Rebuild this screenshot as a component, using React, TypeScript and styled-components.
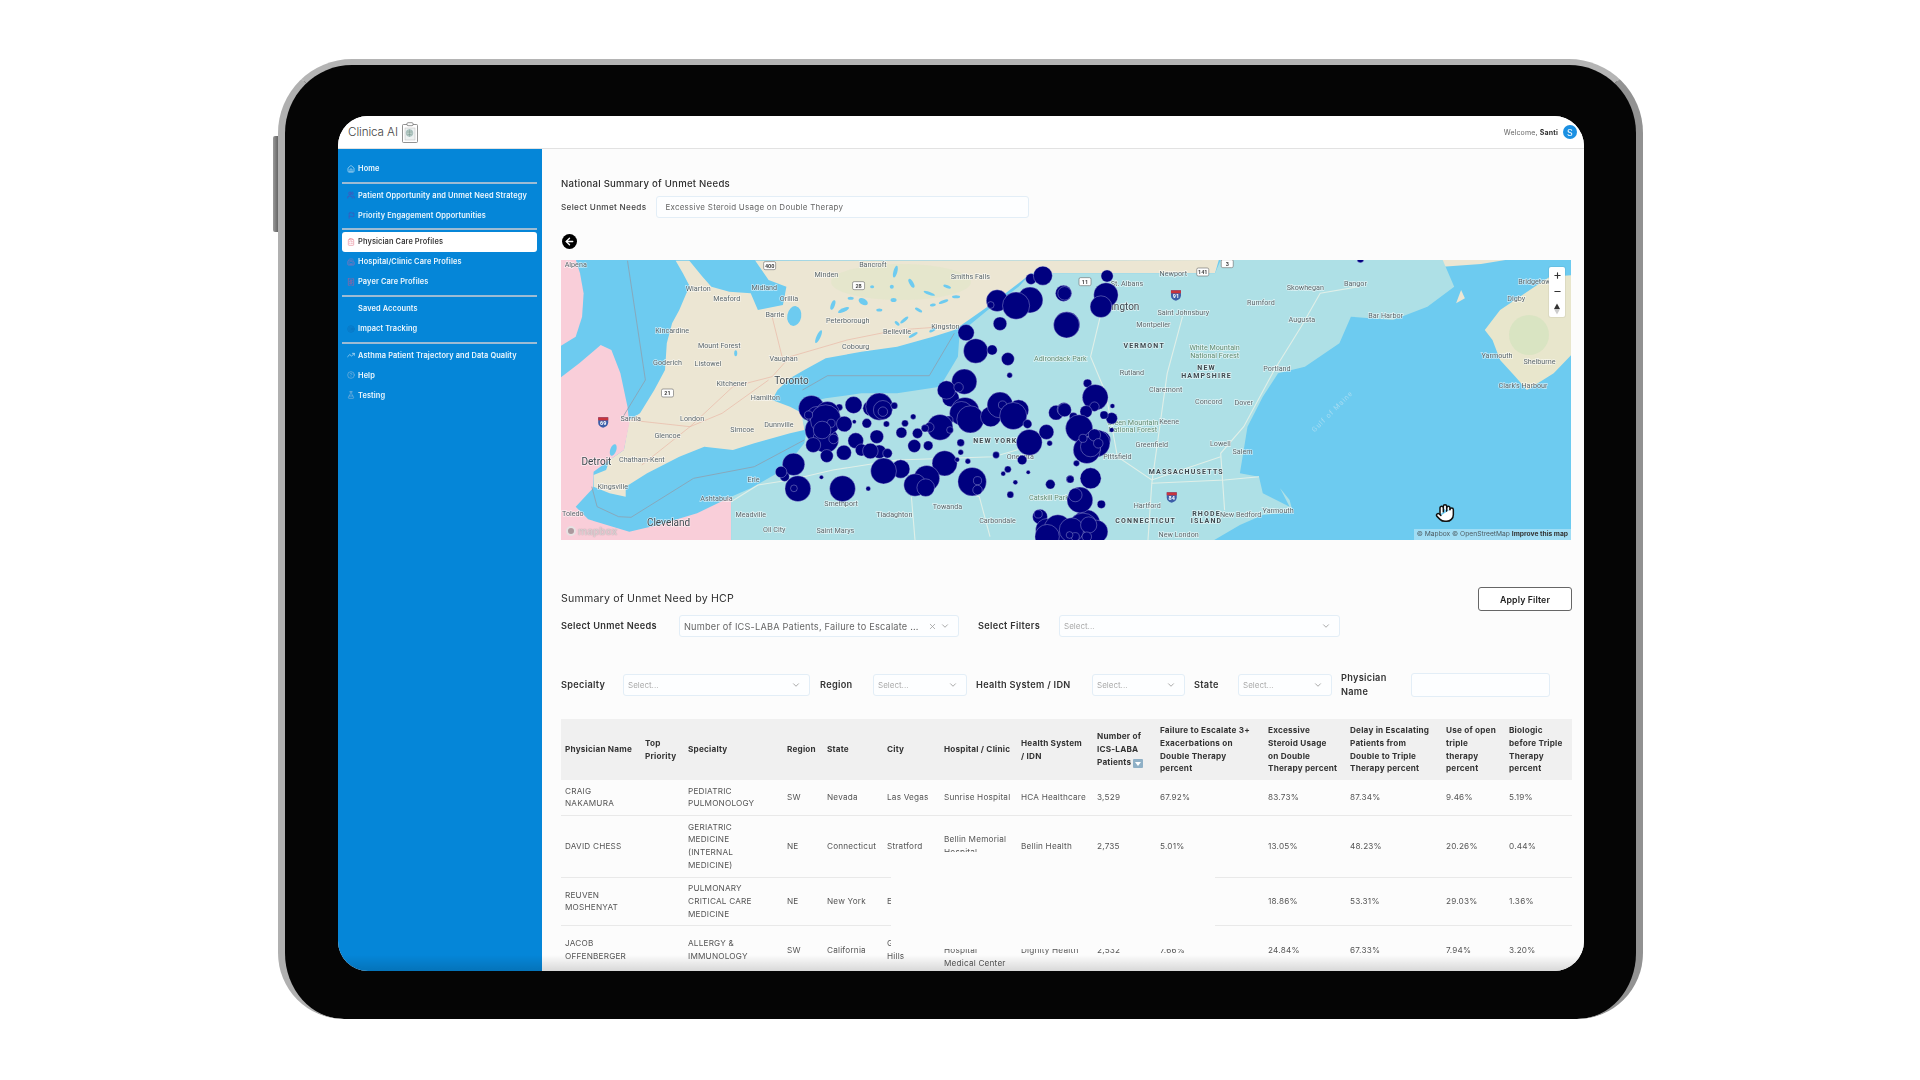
import React from 'react';
import styled, { createGlobalStyle } from 'styled-components';
import {
	ArrowLeft,
	ChevronDown,
	CircleHelp,
	ClipboardList,
	Flag,
	FlaskConical,
	Hand,
	Hospital,
	House,
	Minus,
	Plus,
	Receipt,
	Target,
	TrendingUp,
	Users,
	X,
} from 'lucide-react';

const GlobalStyle = createGlobalStyle`
	html, body {
		margin: 0;
		background: #fff;
		font-family: 'Inter', 'Liberation Sans', sans-serif;
	}
	* { box-sizing: border-box; }
`;

const Page = styled.div`
	height: 1080px;
	overflow: hidden;
	padding: 59px 0 0 278px;
	position: relative;
`;

const SideButton = styled.div`
	position: absolute;
	left: 273px;
	top: 136px;
	width: 6px;
	height: 96px;
	background: linear-gradient(90deg, #9a9a9a, #5a5a5a);
	border-radius: 2px 0 0 2px;
`;

const Tablet = styled.div`
	width: 1365px;
	height: 960px;
	background: #050505;
	border-style: solid;
	border-width: 6px 7px 0 7px;
	border-color: #b4b4b4 #929292 #000 #b0b0b0;
	border-radius: 74px 74px 66px 66px;
	padding: 51px 52px 48px 53px;
	position: relative;
`;

const Screen = styled.div`
	width: 1246px;
	height: 855px;
	border-radius: 30px;
	overflow: hidden;
	background: #fcfcfc;
	display: grid;
	grid-template-columns: 204px 1fr;
	grid-template-rows: 33px 1fr;
	position: relative;
	filter: blur(0.3px);
`;

const BottomFade = styled.div`
	position: absolute;
	left: 0;
	right: 0;
	bottom: 0;
	height: 16px;
	background: linear-gradient(180deg, rgba(0, 0, 0, 0), rgba(0, 0, 0, 0.14));
`;

const Header = styled.header`
	grid-column: 1 / 3;
	display: flex;
	align-items: center;
	justify-content: space-between;
	padding: 0 7px 0 10px;
	background: #fff;
	border-bottom: 1px solid #e2e2e2;
`;

const Brand = styled.div`
	display: flex;
	align-items: center;
	gap: 4px;
	font-size: 11.7px;
	font-weight: 300;
	letter-spacing: -0.1px;
	color: #444;
`;

const Welcome = styled.div`
	display: flex;
	align-items: center;
	gap: 5px;
	font-size: 7px;
	letter-spacing: 0.15px;
	color: #666;

	b {
		color: #333;
		font-weight: 700;
	}
`;

const Avatar = styled.span`
	width: 14px;
	height: 14px;
	border-radius: 50%;
	background: #1b90e2;
	color: #fff;
	font-size: 9px;
	display: flex;
	align-items: center;
	justify-content: center;
`;

const Sidebar = styled.nav`
	background: #0586d8;
	padding: 9.5px 5px 0 4px;
`;

const NavItem = styled.div<{ $active?: boolean }>`
	height: 20px;
	display: flex;
	align-items: center;
	gap: 3px;
	padding-left: 5px;
	font-size: 7.4px;
	letter-spacing: 0.12px;
	font-weight: 600;
	border-radius: 3px;
	color: ${(p) => (p.$active ? '#3a3a3a' : '#eef7fd')};
	background: ${(p) => (p.$active ? '#fff' : 'transparent')};
`;

const NavDivider = styled.div`
	height: 2px;
	background: #9dbcd4;
	margin: 3px 0 1.7px;
`;

const NavIcon = styled.span<{ $color: string }>`
	width: 8px;
	height: 9px;
	display: flex;
	align-items: center;
	justify-content: center;
	color: ${(p) => p.$color};
`;

const Main = styled.main`
	padding: 29px 12px 0 19px;
	overflow: hidden;
	background: #fcfcfc;
`;

const SectionTitle = styled.h2<{ $large?: boolean }>`
	margin: 0;
	font-size: ${(p) => (p.$large ? 10.6 : 9.6)}px;
	letter-spacing: ${(p) => (p.$large ? 0.2 : 0.25)}px;
	line-height: 12px;
	font-weight: ${(p) => (p.$large ? 400 : 500)};
	color: #2f2f2f;
`;

const NationalRow = styled.div`
	display: flex;
	align-items: center;
	gap: 10px;
	margin-top: 6px;
`;

const SmallLabel = styled.span`
	font-size: 8.2px;
	letter-spacing: 0.3px;
	font-weight: 500;
	color: #444;
`;

const Field = styled.div<{ $width: number; $height?: number }>`
	width: ${(p) => p.$width}px;
	height: ${(p) => p.$height ?? 22}px;
	flex: none;
	display: flex;
	align-items: center;
	justify-content: space-between;
	gap: 3px;
	padding: 0 8px 0 4px;
	background: #fdfeff;
	border: 1px solid #e3eef7;
	border-radius: 3px;
	color: #666;

	svg {
		flex: none;
		color: #999;
	}
`;

const Placeholder = styled.span`
	color: #aaa;
	flex: 1;
	font-size: 8px;
`;

const FieldText = styled.span`
	flex: 1;
	white-space: nowrap;
	overflow: hidden;
	font-size: 9.2px;
	letter-spacing: 0.2px;
`;

const NationalText = styled(FieldText)`
	padding-left: 4px;
	font-size: 8px;
	letter-spacing: 0.25px;
`;

const BackButton = styled.div`
	width: 15px;
	height: 15px;
	margin: 16px 0 11px 1px;
	border-radius: 50%;
	background: #000;
	color: #fff;
	display: flex;
	align-items: center;
	justify-content: center;
`;

const MapFrame = styled.div`
	position: relative;
	width: 1010px;
	height: 280px;
	overflow: hidden;
	background: #6dcbf0;
`;

const MapSvg = styled.svg`
	display: block;
	width: 1010px;
	height: 280px;
`;

const Place = styled.text<{ $kind?: string }>`
	font-family: 'Roboto', sans-serif;
	text-anchor: middle;
	fill: ${(p) => (p.$kind === 'park' ? '#5f8a70' : p.$kind === 'state' || p.$kind === 'big' ? '#3f4a50' : '#5b676c')};
	font-size: ${(p) => (p.$kind === 'big' ? 10 : p.$kind === 'state' ? 7 : 7.2)}px;
	font-weight: ${(p) => (p.$kind === 'state' ? 700 : 400)};
	letter-spacing: ${(p) => (p.$kind === 'state' ? 1.2 : 0)}px;
	stroke: rgba(255, 255, 255, 0.6);
	stroke-width: 1.4px;
	paint-order: stroke;
`;

const Shield = styled.text<{ $light?: boolean }>`
	font-family: 'Roboto', sans-serif;
	text-anchor: middle;
	fill: ${(p) => (p.$light ? '#fff' : '#444')};
	font-size: 5.5px;
	font-weight: 700;
`;

const GulfLabel = styled.text`
	font-family: 'Roboto', sans-serif;
	text-anchor: middle;
	font-size: 7px;
	letter-spacing: 1px;
	fill: #a4dcf2;
`;

const ZoomControl = styled.div`
	position: absolute;
	top: 7px;
	right: 6px;
	width: 16px;
	height: 50px;
	background: #fff;
	border-radius: 2px;
	display: grid;
	grid-template-rows: repeat(3, 1fr);
	justify-items: center;
	align-items: center;
	color: #333;
	box-shadow: 0 0 0 1px rgba(0, 0, 0, 0.05);
`;

const Attribution = styled.div`
	position: absolute;
	right: 0;
	bottom: 0;
	height: 11px;
	padding: 0 3px;
	background: rgba(255, 255, 255, 0.35);
	font-size: 6.7px;
	line-height: 11px;
	color: #4c5a60;

	b {
		color: #333;
	}
`;

const Cursor = styled.div`
	position: absolute;
	left: 874px;
	top: 243px;
	color: #111;

	svg {
		fill: #fff;
		display: block;
	}
`;

const MapLogo = styled.div`
	position: absolute;
	left: 5px;
	bottom: 3px;
	display: flex;
	align-items: center;
	gap: 2px;
	font-size: 10px;
	font-weight: 700;
	color: rgba(255, 255, 255, 0.55);
	text-shadow: 0 0 1px rgba(60, 60, 60, 0.5);
`;

const LogoDot = styled.span`
	width: 10px;
	height: 10px;
	border-radius: 50%;
	border: 2px solid rgba(255, 255, 255, 0.7);
	background: rgba(110, 110, 110, 0.55);
`;

const SummaryHead = styled.div`
	display: flex;
	align-items: center;
	justify-content: space-between;
	margin-top: 47px;
`;

const ApplyButton = styled.button`
	width: 94px;
	height: 24px;
	padding: 0;
	background: #fff;
	border: 1px solid #666;
	border-radius: 3px;
	font-family: inherit;
	font-size: 8.8px;
	letter-spacing: 0.1px;
	font-weight: 600;
	color: #222;
`;

const FilterRow = styled.div<{ $top: number }>`
	display: flex;
	align-items: center;
	margin-top: ${(p) => p.$top}px;
`;

const FilterLabel = styled.span<{ $width: number; $indent?: number }>`
	width: ${(p) => p.$width}px;
	padding-left: ${(p) => p.$indent ?? 0}px;
	flex: none;
	font-size: 9.2px;
	letter-spacing: 0.3px;
	line-height: 14px;
	font-weight: 600;
	color: #333;
`;

const DataTable = styled.div`
	position: relative;
	margin-top: 20px;
	width: 1011px;

	table {
		width: 1011px;
		table-layout: fixed;
		border-collapse: collapse;
		font-size: 8.2px;
		letter-spacing: 0.2px;
		line-height: 12.8px;
		color: #555;
	}

	th {
		background: #f0f0f0;
		padding: 4px 0 4px 4px;
		height: 61px;
		text-align: left;
		font-weight: 700;
		color: #333;
		vertical-align: middle;
		white-space: pre-line;
	}

	td {
		padding: 4.7px 0 4.7px 4px;
		border-bottom: 1px solid #e9e9e9;
		vertical-align: middle;
		white-space: pre-line;
	}
`;

const Col = styled.col<{ $width: number }>`
	width: ${(p) => p.$width}px;
`;

const SortBadge = styled.span`
	display: inline-flex;
	width: 10px;
	height: 9px;
	margin-left: 2px;
	vertical-align: -1px;
	background: #8fb0c6;
	border-radius: 1px;
	align-items: center;
	justify-content: center;

	&::after {
		content: '';
		border-left: 3px solid transparent;
		border-right: 3px solid transparent;
		border-top: 4px solid #fff;
	}
`;

const TablePatch = styled.div`
	position: absolute;
	left: 330px;
	top: 133px;
	width: 324px;
	height: 97px;
	background: #fcfcfc;
`;

type Pt = [number, number];

const w = ([x, y]: Pt): Pt => [x / 2.8 - 21, y / 3 - 30];
const e = ([x, y]: Pt): Pt => [x / 2.613 + 499, y / 3 - 150];
const path = (pts: Pt[], close = true) =>
	'M' + pts.map(([x, y]) => `${x.toFixed(1)} ${y.toFixed(1)}`).join('L') + (close ? 'Z' : '');
const W = (list: Pt[]) => list.map(w);
const E = (list: Pt[]) => list.map(e);

const canada = path([
	...W([[380, 92]]),
	...E([[415, 450], [405, 490], [250, 490]]),
	...W([
		[1375, 130], [1340, 160], [1260, 225], [1200, 270], [1160, 300], [1100, 320], [1000, 350], [900, 365],
		[800, 385], [740, 420], [700, 445], [665, 480], [650, 510], [700, 530], [735, 550], [740, 600], [700, 610],
		[600, 640], [540, 660], [460, 650], [390, 680], [300, 730], [240, 770], [240, 800], [195, 790], [150, 770],
		[150, 735], [185, 720], [195, 690], [235, 660], [245, 600], [250, 570], [280, 550], [320, 480], [350, 420],
		[355, 340], [370, 280], [390, 240], [410, 190], [420, 170], [400, 130],
	]),
]);

const usNorth = path([
	...W([
		[535, 932], [535, 800], [590, 775], [680, 720], [740, 640], [745, 612], [735, 570], [735, 520], [800, 505],
		[900, 490], [1000, 490], [1120, 470], [1170, 380], [1175, 310], [1260, 235], [1340, 170], [1375, 130],
	]),
	...E([
		[250, 490], [405, 490], [420, 450], [1000, 450], [1030, 530], [960, 590], [870, 630], [760, 620], [730, 700],
		[640, 770], [570, 790], [530, 860], [490, 950], [470, 1090], [520, 1100], [530, 1150], [600, 1190], [575, 1135],
		[600, 1170], [608, 1205], [530, 1215], [470, 1245], [400, 1292],
	]),
]);

const michiganNorth = path(W([[55, 88], [100, 88], [112, 130], [122, 190], [118, 260], [100, 320], [55, 350]]));
const michiganSouth = path(
	W([
		[55, 445], [110, 400], [170, 345], [200, 360], [225, 430], [245, 530], [250, 580], [235, 660], [195, 690],
		[150, 725], [148, 775], [100, 830], [135, 868], [250, 905], [330, 885], [440, 850], [535, 800], [535, 935], [55, 935],
	]),
);

const georgianBay = path(
	W([
		[415, 88], [600, 88], [640, 150], [690, 170], [680, 225], [610, 240], [590, 190], [530, 185], [480, 170], [455, 140],
	]),
);

const novaScotia = path(
	E([
		[1110, 660], [1150, 600], [1240, 530], [1280, 500], [1340, 495], [1340, 730], [1290, 790], [1220, 840], [1190, 800],
		[1150, 750], [1130, 690],
	]),
);
const newBrunswick = path(E([[960, 450], [1000, 470], [1100, 462], [1175, 448]]));
const grandManan = path(E([[1035, 580], [1048, 540], [1058, 565]]));

// x, y, rx, ry, angle: the small lakes north of Lake Ontario
const lakes: [number, number, number, number, number][] = [
	[712, 258, 7, 10, 10], [995, 125, 2, 6, 15], [1040, 160, 2, 5, -30], [1090, 190, 6, 1.5, 20], [1130, 215, 5, 1.5, -20],
	[1165, 200, 4, 1.5, 0], [850, 240, 6, 2, -25], [905, 215, 5, 3, 30], [780, 320, 2, 7, 25], [870, 205, 3, 1.5, 0],
	[820, 225, 2, 5, 20], [990, 210, 3, 2, 0], [1020, 270, 5, 1.5, -40], [1060, 240, 4, 1.5, 30], [950, 240, 3, 1.5, 0],
	[1000, 280, 3, 1.5, 40], [1100, 225, 3, 1.5, -10], [1140, 170, 4, 1.5, 20], [930, 170, 2, 1.5, 0], [985, 170, 2, 2, 0],
	[548, 370, 1.5, 3, 0], [205, 660, 3, 6, 20], [1045, 315, 5, 1.5, -30], [1100, 300, 4, 1.5, -30], [1075, 340, 5, 1.5, -20],
];

const borders = [
	path(W([[245, 92], [295, 450], [230, 565]]), false),
	path(W([[145, 770], [160, 830], [220, 860], [255, 862], [430, 745], [600, 710], [740, 630]]), false),
	path(W([[735, 480], [805, 437], [1090, 437], [1160, 310]]), false),
];

const ontarioRoads = [
	path(W([[650, 440], [700, 380], [860, 330], [1000, 300], [1130, 290]]), false),
	path(W([[250, 570], [420, 590], [510, 550], [640, 450]]), false),
	path(W([[680, 390], [650, 260]]), false),
	path(W([[285, 705], [420, 590], [540, 470], [650, 440]]), false),
];

const usRoads = [
	path(W([[535, 815], [610, 765], [700, 750], [820, 720], [1000, 690], [1270, 680], [1400, 640]]), false),
	path(E([[105, 620], [80, 740], [120, 850], [150, 1040], [240, 1110], [420, 1040]]), false),
	path(E([[320, 620], [280, 790], [240, 1120], [230, 1290]]), false),
	path(E([[630, 650], [560, 780], [480, 950], [420, 1030], [430, 1200]]), false),
	path(E([[240, 1120], [430, 1110], [520, 1100]]), false),
	path(E([[780, 530], [680, 550], [630, 650]]), false),
	path(W([[1040, 800], [1050, 930]]), false),
	path(W([[1260, 920], [1230, 800], [1200, 790]]), false),
];

const westCircles: [number, number, number][] = [
	[1375, 147, 16], [1408, 137, 28], [1280, 212, 32], [1262, 225, 10], [1372, 210, 38], [1333, 227, 40], [1466, 190, 24],
	[1288, 281, 20], [1475, 284, 38], [1193, 308, 24], [1220, 363, 36], [1266, 360, 15], [1310, 387, 19], [1315, 436, 8],
	[1150, 505, 25], [1188, 455, 37], [1138, 480, 27], [1172, 472, 14], [1190, 545, 42], [1180, 550, 35], [1205, 568, 40],
	[1145, 570, 12], [1262, 560, 30], [1288, 525, 38], [1295, 525, 12], [1340, 540, 30], [1325, 558, 40], [1365, 582, 13],
	[1120, 592, 38], [1090, 592, 14], [1148, 600, 10], [1078, 595, 11], [1045, 560, 8], [1022, 580, 10], [1012, 608, 16],
	[1057, 610, 15], [1048, 648, 19], [1087, 647, 14], [878, 525, 25], [925, 535, 22], [950, 530, 40], [960, 540, 28],
	[960, 545, 14], [992, 527, 10], [838, 532, 10], [760, 535, 38], [775, 560, 30], [805, 550, 35], [780, 600, 40],
	[800, 630, 38], [800, 570, 45], [815, 580, 12], [790, 600, 26], [752, 555, 12], [852, 582, 23], [765, 645, 22], [822, 627, 14], [915, 580, 14],
	[880, 575, 6], [970, 582, 9], [943, 620, 20], [884, 632, 23], [851, 668, 22], [900, 660, 18], [950, 665, 20],
	[925, 663, 23], [973, 670, 14], [803, 678, 19], [710, 703, 33], [685, 740, 14], [675, 726, 17], [722, 776, 38],
	[711, 775, 10], [788, 742, 6], [847, 776, 38], [919, 776, 7], [1010, 717, 27], [962, 723, 38], [1133, 700, 37],
	[1168, 689, 7], [1178, 638, 11], [1178, 667, 8], [1198, 694, 8], [1083, 745, 38], [1050, 765, 33], [1080, 773, 26],
	[1210, 755, 42], [1225, 752, 12], [1225, 780, 14], [1277, 675, 10], [1370, 637, 38], [1418, 606, 22], [1427, 640, 8],
	[1350, 690, 14], [1310, 718, 10], [1297, 731, 7], [1367, 727, 6], [1331, 757, 7], [1317, 794, 10], [1429, 763, 14],
	[1484, 748, 11], [1445, 548, 22], [1467, 538, 20], [1533, 460, 12], [1400, 860, 22], [1420, 900, 34], [1510, 805, 30],
	[1500, 800, 16], [1450, 895, 40], [1530, 880, 40], [1420, 920, 36], [1530, 920, 30], [1480, 915, 12], [1395, 852, 12],
];

const eastCircles: [number, number, number][] = [
	[123, 498, 18], [120, 555, 36], [107, 590, 32], [12, 550, 20], [17, 645, 38], [72, 820, 12], [92, 862, 38], [90, 890, 14],
	[135, 925, 17], [137, 888, 7], [115, 915, 12], [12, 900, 20], [35, 920, 12], [68, 905, 18], [50, 955, 40], [110, 990, 25],
	[95, 1000, 40], [70, 1020, 40], [80, 1010, 30], [60, 985, 12], [90, 975, 18], [100, 1000, 14], [43, 1060, 9], [135, 960, 7], [80, 1105, 31], [27, 1108, 11],
	[52, 1170, 38], [40, 1155, 20], [108, 1183, 12], [60, 1255, 45], [30, 1260, 36], [95, 1265, 34], [75, 1245, 24], [40, 1280, 12], [70, 1280, 14], [25, 1275, 10],
	[785, 448, 10],
];

type Label = [string, number, number, string?];

const westLabels: Label[] = [
	['Alpena', 100, 104], ['Wiarton', 443, 176], ['Meaford', 523, 205], ['Midland', 628, 173], ['Minden', 802, 134],
	['Bancroft', 932, 104], ['Orillia', 697, 205], ['Barrie', 658, 253], ['Peterborough', 862, 272], ['Belleville', 1000, 303],
	['Kingston', 1135, 289], ['Cobourg', 884, 349], ['Smiths Falls', 1205, 140], ['Kincardine', 370, 302], ['Mount Forest', 502, 345],
	['Goderich', 357, 398], ['Listowel', 470, 400], ['Vaughan', 682, 386], ['Toronto', 704, 455, 'big'], ['Kitchener', 537, 460],
	['Hamilton', 631, 503], ['Sarnia', 254, 565], ['London', 426, 564], ['Simcoe', 566, 597], ['Dunnville', 669, 583],
	['Glencoe', 357, 616], ['Chatham-Kent', 285, 689], ['Detroit', 158, 698, 'big'], ['Kingsville', 204, 770], ['Toledo', 92, 851],
	['Erie', 598, 748], ['Ashtabula', 494, 805], ['Cleveland', 360, 880, 'big'], ['Meadville', 590, 853], ['Oil City', 656, 899],
	['Saint Marys', 827, 901], ['Towanda', 1141, 828], ['Tiadaghton', 992, 854], ['Carbondale', 1281, 870], ['Smethport', 843, 819],
	['Catskill Park', 1425, 803, 'park'], ['Adirondack Park', 1457, 386, 'park'], ['NEW YORK', 1275, 630, 'state'],
	['Oneonta', 1345, 680],
];

const eastLabels: Label[] = [
	['Newport', 296, 491], ['St. Albans', 175, 520], ['Burlington', 148, 592, 'big'], ['Saint Johnsbury', 322, 608], ['Montpelier', 244, 642],
	['VERMONT', 220, 705, 'state'], ['White Mountain', 404, 713, 'park'], ['National Forest', 404, 735, 'park'], ['NEW', 383, 772, 'state'],
	['HAMPSHIRE', 383, 797, 'state'], ['Rutland', 188, 787], ['Claremont', 276, 837], ['Concord', 388, 875], ['Dover', 480, 877],
	['Portland', 567, 775], ['Augusta', 632, 628], ['Rumford', 525, 577], ['Skowhegan', 641, 531], ['Bangor', 772, 521],
	['Bar Harbor', 851, 616], ['Bridgetown', 1245, 513], ['Digby', 1192, 564], ['Yarmouth', 1142, 737], ['Shelburne', 1253, 754],
	["Clark's Harbour", 1210, 825], ['Keene', 285, 935], ['Green Mountain', 190, 937, 'park'], ['National Forest', 190, 958, 'park'],
	['Greenfield', 240, 1004], ['Lowell', 419, 1000], ['Salem', 477, 1025], ['Pittsfield', 150, 1040], ['MASSACHUSETTS', 330, 1083, 'state'],
	['Hartford', 228, 1187], ['CONNECTICUT', 224, 1232, 'state'], ['RHODE', 383, 1209, 'state'], ['ISLAND', 383, 1230, 'state'],
	['New Bedford', 472, 1214], ['Yarmouth', 570, 1202], ['New London', 310, 1274],
];

const shields: [string, Pt][] = [
	['400', w([643, 107])], ['28', w([892, 167])], ['21', w([357, 489])], ['11', w([1526, 155])],
	['141', e([373, 486])], ['3', e([437, 461])],
];

const interstates: [string, Pt][] = [
	['69', w([177, 577])], ['91', e([303, 556])], ['84', e([292, 1162])],
];

const Circles = () => {
	const all = [
		...westCircles.map(([x, y, r]) => [...w([x, y]), r / 2.95]),
		...eastCircles.map(([x, y, r]) => [...e([x, y]), r / 2.95]),
	];
	return (
		<g fill="#00007f" stroke="#c4c9ee" strokeOpacity={0.6} strokeWidth={0.6}>
			{all.map(([x, y, r], i) => (
				<circle key={i} cx={x} cy={y} r={r} />
			))}
		</g>
	);
};

const Labels = ({ list, at }: { list: Label[]; at: (p: Pt) => Pt }) => (
	<>
		{list.map(([text, x, y, kind]) => {
			const [lx, ly] = at([x, y]);
			return (
				<Place key={text + x} x={lx} y={ly + 2.5} $kind={kind}>
					{text}
				</Place>
			);
		})}
	</>
);

const BaseMap = () => (
	<MapSvg viewBox="0 0 1010 280">
		<rect width="1010" height="280" fill="#6dcbf0" />
		<path d={canada} fill="#ece6d3" />
		<path d={novaScotia} fill="#e8e6cc" />
		<path d={newBrunswick} fill="#ece6d3" />
		<path d={grandManan} fill="#ece6d3" />
		<ellipse cx="968" cy="75" rx="20" ry="20" fill="#d3e2bd" opacity="0.7" />
		<ellipse cx="340" cy="22" rx="70" ry="18" fill="#dde5c4" opacity="0.4" />
		<path d={georgianBay} fill="#6dcbf0" />
		<path d={michiganNorth} fill="#f9ced9" />
		<path d={michiganSouth} fill="#f9ced9" />
		<path d={usNorth} fill="#aee0e6" />
		{lakes.map(([x, y, rx, ry, angle], i) => {
			const [cx, cy] = w([x, y]);
			return (
				<ellipse key={i} cx={cx} cy={cy} rx={rx} ry={ry} fill="#6dcbf0" transform={`rotate(${angle} ${cx} ${cy})`} />
			);
		})}
		{ontarioRoads.map((d, i) => (
			<path key={i} d={d} fill="none" stroke="#eab9a8" strokeWidth="0.7" />
		))}
		{usRoads.map((d, i) => (
			<path key={i} d={d} fill="none" stroke="#e0efe8" strokeWidth="1.1" />
		))}
		{borders.map((d, i) => (
			<path key={i} d={d} fill="none" stroke="#8d9fae" strokeWidth="0.8" />
		))}
		<Labels list={westLabels} at={w} />
		<Labels list={eastLabels} at={e} />
		<GulfLabel x="773" y="153" transform="rotate(-45 773 153)">
			Gulf of Maine
		</GulfLabel>
		{shields.map(([text, [x, y]]) => (
			<g key={text}>
				<rect x={x - 6} y={y - 4} width="12" height="8" rx="1.5" fill="#fff" stroke="#666" strokeWidth="0.6" />
				<Shield x={x} y={y + 2}>
					{text}
				</Shield>
			</g>
		))}
		{interstates.map(([text, [x, y]]) => (
			<g key={text}>
				<path d={`M${x - 5} ${y - 5}h10v5q0 4-5 5.5q-5-1.5-5-5z`} fill="#3c5ea8" />
				<rect x={x - 5} y={y - 5} width="10" height="3" fill="#c8333c" />
				<Shield x={x} y={y + 3} $light>
					{text}
				</Shield>
			</g>
		))}
		<Circles />
	</MapSvg>
);

const ClinicaLogo = () => (
	<svg width="16" height="21" viewBox="0 0 16 21" fill="none" stroke="#777" strokeWidth="0.8">
		<rect x="0.5" y="2.5" width="15" height="18" rx="1" />
		<rect x="5" y="0.7" width="6" height="3" rx="1" fill="#fff" />
		<rect x="3" y="6" width="10" height="12" fill="#eef2f2" stroke="#bbb" strokeWidth="0.5" />
		<circle cx="7.5" cy="11" r="3.4" fill="#b9ccc6" stroke="#8aa" strokeWidth="0.5" />
		<path d="M7.5 7.6v7M5 10h5M5.5 12.5h4" stroke="#6b8a80" strokeWidth="0.4" />
	</svg>
);

const NorthArrow = () => (
	<svg width="8" height="12" viewBox="0 0 8 12">
		<path d="M4 0.5 7 6H1z" fill="#333" />
		<path d="M4 11.5 1 6h6z" fill="#ccc" />
	</svg>
);

const navGroups = [
	[{ label: 'Home', icon: <House size={8} />, color: '#cfe8f8' }],
	[
		{ label: 'Patient Opportunity and Unmet Need Strategy', icon: <Users size={8} />, color: '#5a46b0' },
		{ label: 'Priority Engagement Opportunities', icon: <Flag size={7} />, color: '#5a46b0' },
	],
	[
		{ label: 'Physician Care Profiles', icon: <ClipboardList size={8} />, color: '#ea8c9c', active: true },
		{ label: 'Hospital/Clinic Care Profiles', icon: <Hospital size={8} />, color: '#7b76bd' },
		{ label: 'Payer Care Profiles', icon: <Receipt size={8} />, color: '#a0619f' },
	],
	[
		{ label: 'Saved Accounts', icon: null, color: '#0586d8' },
		{ label: 'Impact Tracking', icon: <Target size={8} />, color: '#0a72c0' },
	],
	[
		{ label: 'Asthma Patient Trajectory and Data Quality', icon: <TrendingUp size={8} />, color: '#cfe8f8' },
		{ label: 'Help', icon: <CircleHelp size={8} />, color: '#7fb4dc' },
		{ label: 'Testing', icon: <FlaskConical size={8} />, color: '#7fb4dc' },
	],
];

const columns = [80, 43, 99, 40, 60, 57, 77, 76, 63, 108, 82, 96, 63, 67];

const headings = [
	'Physician Name',
	'Top\nPriority',
	'Specialty',
	'Region',
	'State',
	'City',
	'Hospital / Clinic',
	'Health System\n/ IDN',
	'Number of\nICS-LABA\nPatients',
	'Failure to Escalate 3+\nExacerbations on\nDouble Therapy\npercent',
	'Excessive\nSteroid Usage\non Double\nTherapy percent',
	'Delay in Escalating\nPatients from\nDouble to Triple\nTherapy percent',
	'Use of open\ntriple\ntherapy\npercent',
	'Biologic\nbefore Triple\nTherapy\npercent',
];

const rows = [
	['CRAIG\nNAKAMURA', '', 'PEDIATRIC\nPULMONOLOGY', 'SW', 'Nevada', 'Las Vegas', 'Sunrise Hospital', 'HCA Healthcare', '3,529', '67.92%', '83.73%', '87.34%', '9.46%', '5.19%'],
	['DAVID CHESS', '', 'GERIATRIC\nMEDICINE\n(INTERNAL\nMEDICINE)', 'NE', 'Connecticut', 'Stratford', 'Bellin Memorial\nHospital', 'Bellin Health', '2,735', '5.01%', '13.05%', '48.23%', '20.26%', '0.44%'],
	['REUVEN\nMOSHENYAT', '', 'PULMONARY\nCRITICAL CARE\nMEDICINE', 'NE', 'New York', 'Elmhurst', '', '', '', '', '18.86%', '53.31%', '29.03%', '1.36%'],
	['JACOB\nOFFENBERGER', '', 'ALLERGY &\nIMMUNOLOGY', 'SW', 'California', 'Granada\nHills', "St. Mary's\nHospital\nMedical Center", 'Dignity Health', '2,532', '7.66%', '24.84%', '67.33%', '7.94%', '3.20%'],
];

const App = () => {
	return (
		<Page>
			<GlobalStyle />
			<SideButton />
			<Tablet>
				<Screen>
					<Header>
						<Brand>
							Clinica AI
							<ClinicaLogo />
						</Brand>
						<Welcome>
							<span>
								Welcome, <b>Santi</b>
							</span>
							<Avatar>S</Avatar>
						</Welcome>
					</Header>
					<Sidebar>
						{navGroups.map((group, index) => (
							<div key={index}>
								{index > 0 && <NavDivider />}
								{group.map((item) => (
									<NavItem key={item.label} $active={'active' in item}>
										<NavIcon $color={item.color}>{item.icon}</NavIcon>
										{item.label}
									</NavItem>
								))}
							</div>
						))}
					</Sidebar>
					<Main>
						<SectionTitle>National Summary of Unmet Needs</SectionTitle>
						<NationalRow>
							<SmallLabel>Select Unmet Needs</SmallLabel>
							<Field $width={373}>
								<NationalText>Excessive Steroid Usage on Double Therapy</NationalText>
							</Field>
						</NationalRow>
						<BackButton>
							<ArrowLeft size={11} strokeWidth={3} />
						</BackButton>
						<MapFrame>
							<BaseMap />
							<MapLogo>
								<LogoDot />
								mapbox
							</MapLogo>
							<ZoomControl>
								<Plus size={9} strokeWidth={3} />
								<Minus size={9} strokeWidth={3} />
								<NorthArrow />
							</ZoomControl>
							<Attribution>
								© Mapbox © OpenStreetMap <b>Improve this map</b>
							</Attribution>
							<Cursor>
								<Hand size={20} strokeWidth={1.8} />
							</Cursor>
						</MapFrame>

						<SummaryHead>
							<SectionTitle $large>Summary of Unmet Need by HCP</SectionTitle>
							<ApplyButton>Apply Filter</ApplyButton>
						</SummaryHead>
						<FilterRow $top={4}>
							<FilterLabel $width={118}>Select Unmet Needs</FilterLabel>
							<Field $width={280}>
								<FieldText>Number of ICS-LABA Patients, Failure to Escalate ...</FieldText>
								<X size={9} />
								<ChevronDown size={10} />
							</Field>
							<FilterLabel $width={100} $indent={19}>
								Select Filters
							</FilterLabel>
							<Field $width={281}>
								<Placeholder>Select...</Placeholder>
								<ChevronDown size={10} />
							</Field>
						</FilterRow>
						<FilterRow $top={34}>
							<FilterLabel $width={62}>Specialty</FilterLabel>
							<Field $width={187}>
								<Placeholder>Select...</Placeholder>
								<ChevronDown size={10} />
							</Field>
							<FilterLabel $width={63} $indent={10}>
								Region
							</FilterLabel>
							<Field $width={94}>
								<Placeholder>Select...</Placeholder>
								<ChevronDown size={10} />
							</Field>
							<FilterLabel $width={125} $indent={9}>
								Health System / IDN
							</FilterLabel>
							<Field $width={93}>
								<Placeholder>Select...</Placeholder>
								<ChevronDown size={10} />
							</Field>
							<FilterLabel $width={53} $indent={9}>
								State
							</FilterLabel>
							<Field $width={94}>
								<Placeholder>Select...</Placeholder>
								<ChevronDown size={10} />
							</Field>
							<FilterLabel $width={79} $indent={9}>
								Physician
								<br />
								Name
							</FilterLabel>
							<Field $width={139} $height={24} />
						</FilterRow>
						<DataTable>
							<table>
								<colgroup>
									{columns.map((width, i) => (
										<Col key={i} $width={width} />
									))}
								</colgroup>
								<thead>
									<tr>
										{headings.map((heading) => (
											<th key={heading}>
												{heading}
												{heading.startsWith('Number') && <SortBadge />}
											</th>
										))}
									</tr>
								</thead>
								<tbody>
									{rows.map((row) => (
										<tr key={row[0]}>
											{row.map((cell, i) => (
												<td key={i}>{cell}</td>
											))}
										</tr>
									))}
								</tbody>
							</table>
							<TablePatch />
						</DataTable>
					</Main>
					<BottomFade />
				</Screen>
			</Tablet>
		</Page>
	);
};

export default App;
